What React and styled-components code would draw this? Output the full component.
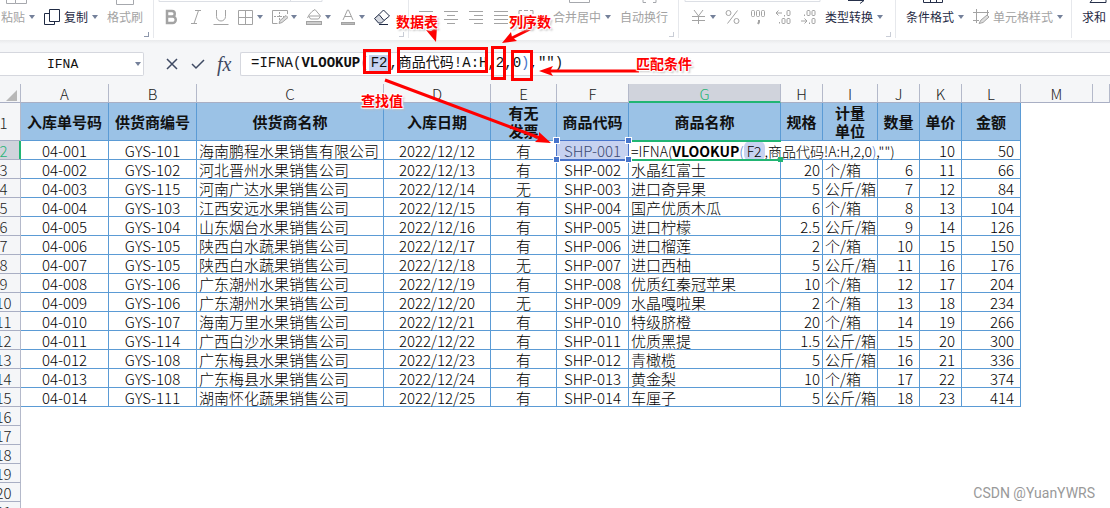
import { useState } from "react";
import styled, { createGlobalStyle, css } from "styled-components";

const letters = ["A", "B", "C", "D", "E", "F", "G", "H", "I", "J", "K", "L", "M"];
const widths = [88, 88, 187, 107, 66, 72, 152, 42, 55, 42, 42, 59, 72];

const titles = [
    "入库单号码", "供货商编号", "供货商名称", "入库日期", "有无发票", "商品代码",
    "商品名称", "规格", "计量单位", "数量", "单价", "金额",
];

const aligns = ["center", "center", "left", "center", "center", "center", "left", "right", "left", "mid", "mid", "far"];

const rows = [
    ["04-001", "GYS-101", "海南鹏程水果销售有限公司", "2022/12/12", "有", "SHP-001", "", "", "", "", "10", "50"],
    ["04-002", "GYS-102", "河北晋州水果销售公司", "2022/12/13", "有", "SHP-002", "水晶红富士", "20", "个/箱", "6", "11", "66"],
    ["04-003", "GYS-115", "河南广达水果销售公司", "2022/12/14", "无", "SHP-003", "进口奇异果", "5", "公斤/箱", "7", "12", "84"],
    ["04-004", "GYS-103", "江西安远水果销售公司", "2022/12/15", "有", "SHP-004", "国产优质木瓜", "6", "个/箱", "8", "13", "104"],
    ["04-005", "GYS-104", "山东烟台水果销售公司", "2022/12/16", "有", "SHP-005", "进口柠檬", "2.5", "公斤/箱", "9", "14", "126"],
    ["04-006", "GYS-105", "陕西白水蔬果销售公司", "2022/12/17", "有", "SHP-006", "进口榴莲", "2", "个/箱", "10", "15", "150"],
    ["04-007", "GYS-105", "陕西白水蔬果销售公司", "2022/12/18", "无", "SHP-007", "进口西柚", "5", "公斤/箱", "11", "16", "176"],
    ["04-008", "GYS-106", "广东潮州水果销售公司", "2022/12/19", "有", "SHP-008", "优质红秦冠苹果", "10", "个/箱", "12", "17", "204"],
    ["04-009", "GYS-106", "广东潮州水果销售公司", "2022/12/20", "无", "SHP-009", "水晶嘎啦果", "2", "个/箱", "13", "18", "234"],
    ["04-010", "GYS-107", "海南万里水果销售公司", "2022/12/21", "有", "SHP-010", "特级脐橙", "20", "个/箱", "14", "19", "266"],
    ["04-011", "GYS-114", "广西白沙水果销售公司", "2022/12/22", "有", "SHP-011", "优质黑提", "1.5", "公斤/箱", "15", "20", "300"],
    ["04-012", "GYS-108", "广东梅县水果销售公司", "2022/12/23", "有", "SHP-012", "青橄榄", "5", "公斤/箱", "16", "21", "336"],
    ["04-013", "GYS-108", "广东梅县水果销售公司", "2022/12/24", "有", "SHP-013", "黄金梨", "10", "个/箱", "17", "22", "374"],
    ["04-014", "GYS-111", "湖南怀化蔬果销售公司", "2022/12/25", "有", "SHP-014", "车厘子", "5", "公斤/箱", "18", "23", "414"],
];

const emptyRows = [16, 17, 18, 19, 20, 21];

const iconPaths = {
    copy: <><path d="M5.5 .5h10v12h-10z" /><path d="M5.5 4.500h-5v11h10v-3" /></>,
    bold: <path d="M4 2v12h5.500a3 3 0 0 0 0-6.500h-5.500h5a2.700 2.700 0 0 0 0-5.500z" strokeWidth="2.500" />,
    italic: <path d="M7 1.500h6M3 14.500h6M10.500 1.500l-4.500 13" />,
    underline: <path d="M3.500 1v6.500a4.500 4.500 0 0 0 9 0v-6.500M.5 15.500h15" />,
    borders: <path d="M.5 1.500h14v14h-14zM7.500 1.500v14M.5 8.500h14" />,
    borderPen: <><path d="M15.500 5v-3.500h-15v13h5" /><path d="M7.500 3v9M2 7.500h10" strokeDasharray="2 1" /><path d="M7 14.500l1-3 6-5 2 2-6 5z" fill="#ddd" /></>,
    fill: <><path d="M6 2.500l3-2 5.500 6.500-2 3h-8l-2-3.500zM3 7h11M1.500 9l1-2" /><rect x="0.500" y="12.500" width="15" height="3" fill="#ccc" /></>,
    fontColor: <><path d="M3 11l4.500-10h1l4.500 10M5 7.500h6" /><rect x="1.500" y="13.500" width="13" height="2" fill="#bbb" /></>,
    eraser: <><path d="M5 5.500l5 6-2.500 2.500h-3l-4-4.500z" fill="#d7dae1" /><path d="M5 5.500l4.500-4.500 6 6-5.500 4.500M5 15.500h9" /></>,
    alignLeft: <path d="M1 2.500h14M1 6.500h9M1 10.500h14M1 14.500h9" />,
    alignCenter: <path d="M1 2.500h14M4 6.500h8M1 10.500h14M4 14.500h8" />,
    alignRight: <path d="M1 2.500h14M6 6.500h9M1 10.500h14M6 14.500h9" />,
    justify: <path d="M1 2.500h14M1 6.500h14M1 10.500h14M1 14.500h14" />,
    distribute: <path d="M1 5v-3.500h3M12 1.500h3v3.500M6 1.500h4M1 10.500h14M1 14.500h14M3 6.500h10" />,
    yen: <path d="M3 1l4.500 6 4.500-6M7.500 7v8M1 7.500h13M1 11.500h13" />,
    percent: <><circle cx="3.500" cy="4" r="2.500" /><circle cx="11.500" cy="12" r="2.500" /><path d="M12.500 1.500l-10 13" /></>,
    thousands: <><rect x="1.500" y="1.500" width="3" height="6" rx="1" /><rect x="6.500" y="1.500" width="3" height="6" rx="1" /><rect x="11.500" y="1.500" width="3" height="6" rx="1" /><path d="M9 11v2l-1 2" strokeWidth="2" /></>,
    moreDecimals: <><path d="M7 4h-6l2.500-2.500M1 4l2.500 2.500" /><path d="M9.500 6v1.500M4.500 13v1.500" /><rect x="12" y="1.500" width="3" height="5" rx="1" /><rect x="7" y="9.500" width="3" height="5" rx="1" /><rect x="12" y="9.500" width="3" height="5" rx="1" /></>,
    fewerDecimals: <><path d="M1 12h6l-2.500-2.500M7 12l-2.500 2.500" /><path d="M4.500 5.500v1.500M9.500 13.500v1.500" /><rect x="7" y="1.500" width="3" height="5" rx="1" /><rect x="12" y="1.500" width="3" height="5" rx="1" /><rect x="12" y="9.500" width="3" height="5" rx="1" /></>,
    cellStyle: <><path d="M0 3.500h16M3.500 0v14M14.500 1v5M0 11.500h6" /><path d="M6 14.500l2-3.500 6-5 2 2-6 5.500z" fill="#ddd" /></>,
};

function Icon({ name }) {
    return (
        <svg width="16" height="16" viewBox="0 0 16 16" fill="none" stroke="currentColor" aria-hidden="true">
            {iconPaths[name]}
        </svg>
    );
}

function Caret() {
    return (
        <svg width="6" height="4" viewBox="0 0 6 4" aria-hidden="true">
            <path d="M0 0h6l-3 4z" fill="#74809a" />
        </svg>
    );
}

function Tool({ icon, text, label, dark, menu }) {
    return (
        <ToolButton type="button" aria-label={label || text} $dark={dark} $text={Boolean(text)}>
            {icon && <Icon name={icon} />}
            {text && <span>{text}</span>}
            {menu && <Caret />}
        </ToolButton>
    );
}

function Group({ width, pad, stub, launcher, children }) {
    return (
        <ToolGroup $width={width}>
            <svg width="100%" height="6" fill="none" stroke="#a6a8ad" aria-hidden="true">{stub}</svg>
            <ToolRow $pad={pad}>{children}</ToolRow>
            {launcher && <Launcher type="button" aria-label="更多设置" $dim={launcher === "dim"} />}
        </ToolGroup>
    );
}

function Toolbar() {
    return (
        <Ribbon>
            <Group width={154} pad={1} launcher="on" stub={<path d="M6.500 0v3.500h9M15.500 0v3.500h11v-3.500M116.500 0v4.500h17v-4.500" />}>
                <Tool text="粘贴" menu />
                <Tool icon="copy" text="复制" dark menu />
                <Tool text="格式刷" />
            </Group>
            <Group width={255} pad={9} launcher="dim" stub={<path d="M5 0v1.500h163v-1.500M136.500 0v1.500" stroke="#dcdfe5" />}>
                <Tool icon="bold" label="加粗" />
                <Tool icon="italic" label="倾斜" />
                <Tool icon="underline" label="下划线" />
                <Tool icon="borders" label="边框" menu />
                <Tool icon="borderPen" label="绘制边框" menu />
                <Tool icon="fill" label="填充颜色" menu />
                <Tool icon="fontColor" label="字体颜色" menu />
                <Tool icon="eraser" label="清除" dark />
            </Group>
            <Group width={270} pad={9} launcher="dim" stub={<path d="M160.500 0v2.500h20v-2.500M234 0v2.500h3M247 0v2.500h-3" />}>
                <Tool icon="alignLeft" label="左对齐" />
                <Tool icon="alignCenter" label="居中" />
                <Tool icon="alignRight" label="右对齐" />
                <Tool icon="justify" label="两端对齐" />
                <Tool icon="distribute" label="分散对齐" />
                <Space />
                <Tool text="合并居中" menu />
                <Tool text="自动换行" />
            </Group>
            <Group
                width={217}
                pad={12}
                launcher="dim"
                stub={<><path d="M6 0v1.500h135v-1.500" stroke="#dcdfe5" /><path d="M169 .5h16M181 3.500l4-3" stroke="#26304a" /></>}
            >
                <Tool icon="yen" label="货币" menu />
                <Tool icon="percent" label="百分比" />
                <Tool icon="thousands" label="千位分隔" />
                <Tool icon="moreDecimals" label="增加小数位" />
                <Tool icon="fewerDecimals" label="减少小数位" />
                <Tool text="类型转换" dark menu />
            </Group>
            <Group width={176} pad={10} stub={<path d="M27.500 0v2.500h19v-2.500M34.500 0v2.500M40.500 0v2.500" stroke="#26304a" />}>
                <Tool text="条件格式" dark menu />
                <Tool icon="cellStyle" text="单元格样式" menu />
            </Group>
            <Group pad={10} stub={<path d="M20 0l-2 2.500h16v-2.500" stroke="#26304a" />}>
                <Tool text="求和" dark menu />
            </Group>
        </Ribbon>
    );
}

function FormulaBar() {
    const [name, setName] = useState("IFNA");

    return (
        <BarRow>
            <NameBox>
                <NameInput aria-label="名称框" value={name} onChange={(e) => setName(e.target.value)} />
                <Caret />
            </NameBox>
            <BarActions>
                <BarButton type="button" aria-label="取消">
                    <svg width="14" height="14" viewBox="0 0 14 14" fill="none" stroke="currentColor"><path d="M2 2l10 10M12 2l-10 10" strokeWidth="1.500" /></svg>
                </BarButton>
                <BarButton type="button" aria-label="输入">
                    <svg width="14" height="14" viewBox="0 0 14 14" fill="none" stroke="currentColor"><path d="M1 7l4 4 8-8" strokeWidth="1.500" /></svg>
                </BarButton>
                <FxButton type="button" aria-label="插入函数">fx</FxButton>
            </BarActions>
            <FormulaBox role="textbox" aria-label="编辑栏" tabIndex={0}>
                =IFNA(<b>VLOOKUP</b><Paren>(</Paren><Mark>F2</Mark>,商品代码!A:H,2,0<Paren>)</Paren>,"")
            </FormulaBox>
        </BarRow>
    );
}

function Sheet() {
    return (
        <SheetTable>
            <colgroup>
                <Col $width={34} />
                {widths.map((w, i) => <Col key={letters[i]} $width={w} />)}
                <col />
            </colgroup>
            <thead>
                <tr>
                    <CornerHead aria-label="全选">
                        <svg width="11" height="11" viewBox="0 0 11 11"><path d="M11 0v11h-11z" fill="#b8b8b8" /></svg>
                    </CornerHead>
                    {letters.map((l) => <ColHead key={l} scope="col" $active={l === "G"}>{l}</ColHead>)}
                    <ColHead aria-hidden="true" />
                </tr>
            </thead>
            <tbody>
                <tr>
                    <RowHead scope="row" $tall>1</RowHead>
                    {titles.map((t) => (
                        <TitleCell key={t}>
                            <Title $narrow={t === "有无发票" || t === "计量单位"}>{t}</Title>
                        </TitleCell>
                    ))}
                    <Blank colSpan={2} />
                </tr>
                {rows.map((row, r) => (
                    <tr key={row[0]}>
                        <RowHead scope="row" $active={r === 0}>{r + 2}</RowHead>
                        {row.map((value, c) => {
                            if (r === 0 && c === 5) {
                                return <RefCell key={c}>{value}<Handle $x="left" $y="top" /><Handle $x="right" $y="top" /><Handle $x="left" $y="bottom" /><Handle $x="right" $y="bottom" /></RefCell>;
                            }
                            if (r === 0 && c === 6) {
                                return (
                                    <EditCell key={c} colSpan={4}>
                                        <CellFrame />
                                        =IFNA(<b>VLOOKUP</b><Paren>(</Paren><RefChip>F2</RefChip>,商品代码!A:H,2,0<Paren>)</Paren>,"")
                                    </EditCell>
                                );
                            }
                            if (r === 0 && c > 6 && c < 10) return null;
                            return <Cell key={c} $align={aligns[c]}>{value}</Cell>;
                        })}
                        <Blank colSpan={2} />
                    </tr>
                ))}
                {emptyRows.map((n) => (
                    <tr key={n}>
                        <RowHead scope="row">{n}</RowHead>
                        <Blank colSpan={14} />
                    </tr>
                ))}
            </tbody>
        </SheetTable>
    );
}

function Notes() {
    return (
        <NoteLayer>
            <svg width="1110" height="508" viewBox="0 0 1110 508" fill="none" stroke="#f00" strokeWidth="3" aria-hidden="true">
                <rect x="364.500" y="50.500" width="25" height="22" />
                <rect x="398.500" y="48.500" width="88" height="23" />
                <rect x="492.500" y="47.500" width="12" height="31" />
                <rect x="512.500" y="51.500" width="19" height="28" />
                <path d="M532 28L512 38M639 71H550M385 80L540 138" />
                <g fill="#f00" stroke="none">
                    <path d="M436 42l-10-12 5 1 6-4z" />
                    <path d="M502 43l9-11 1 5 5 4z" />
                    <path d="M539 71l14-5-3 5 3 5z" />
                    <path d="M551 143l-16-1 4-4 0-6z" />
                </g>
            </svg>
            <NoteText $x={396} $y={11}>数据表</NoteText>
            <NoteText $x={509} $y={11}>列序数</NoteText>
            <NoteText $x={636} $y={53}>匹配条件</NoteText>
            <NoteText $x={361} $y={90}>查找值</NoteText>
        </NoteLayer>
    );
}

export default function App() {
    return (
        <Page>
            <GlobalStyle />
            <Toolbar />
            <FormulaBar />
            <Sheet />
            <Notes />
            <Watermark>CSDN @YuanYWRS</Watermark>
        </Page>
    );
}

const GlobalStyle = createGlobalStyle`
    * {
        box-sizing: border-box;
    }
    body {
        margin: 0;
        background: #fff;
        font-family: "Noto Sans CJK SC", sans-serif;
    }
    button {
        font-family: inherit;
        border: none;
        background: none;
        padding: 0;
    }
`;

const Page = styled.div`
    position: relative;
    height: 100vh;
    overflow: hidden;
    color: #222;
`;

const Ribbon = styled.div`
    display: flex;
    height: 40px;
    background: #fff;
    overflow: hidden;
`;

const ToolGroup = styled.div`
    display: flex;
    flex-direction: column;
    flex: ${(props) => (props.$width ? `0 0 ${props.$width}px` : "1 0 0")};
    height: 38px;
    border-right: ${(props) => (props.$width ? "1px solid #e6e8ec" : "none")};
    svg {
        flex-shrink: 0;
    }
`;

const ToolRow = styled.div`
    display: flex;
    align-items: center;
    gap: 9px;
    height: 22px;
    padding-left: ${(props) => props.$pad}px;
`;

const ToolButton = styled.button`
    display: flex;
    align-items: center;
    flex-shrink: 0;
    gap: ${(props) => (props.$text ? 4 : 3)}px;
    font-size: 12px;
    line-height: 20px;
    white-space: nowrap;
    color: ${(props) => (props.$dark ? "#1f2a44" : "#a3a3a3")};
`;

const Space = styled.span`
    width: 1px;
`;

const Launcher = styled.button`
    align-self: flex-end;
    width: 5px;
    height: 5px;
    margin: 4px 4px 0 0;
    border-right: 1px solid ${(props) => (props.$dim ? "#c9cdd6" : "#8d97ab")};
    border-bottom: 1px solid ${(props) => (props.$dim ? "#c9cdd6" : "#8d97ab")};
`;

const BarRow = styled.div`
    display: flex;
    align-items: center;
    height: 44px;
    padding-bottom: 8px;
    padding-top: 12px;
    background: linear-gradient(#e9eaec, #f5f6f8 4px);
`;

const boxed = css`
    height: 24px;
    background: #fff;
    border: 1px solid #d5d7de;
`;

const NameBox = styled.div`
    ${boxed}
    display: flex;
    align-items: center;
    flex: 0 0 144px;
    min-width: 0;
    padding-right: 2px;
    border-left: none;
    border-radius: 0 2px 2px 0;
`;

const NameInput = styled.input`
    flex: 1;
    min-width: 0;
    width: 100%;
    padding: 0 0 0 47px;
    border: none;
    outline: none;
    background: none;
    font-family: "Liberation Mono", monospace;
    font-size: 13px;
    color: #111;
`;

const BarActions = styled.div`
    display: flex;
    align-items: center;
    flex: 0 0 96px;
    gap: 12px;
    padding-left: 21px;
`;

const BarButton = styled.button`
    display: flex;
    color: #3f4a63;
`;

const FxButton = styled(BarButton)`
    font-family: "Liberation Serif", serif;
    font-style: italic;
    font-size: 20px;
    line-height: 20px;
`;

const FormulaBox = styled.div`
    ${boxed}
    flex: 1;
    padding-left: 10px;
    border-right: none;
    border-radius: 2px 0 0 2px;
    font-family: "Liberation Mono", "Noto Sans CJK SC", monospace;
    font-size: 14px;
    line-height: 20px;
    white-space: nowrap;
    color: #111;
`;

const Paren = styled.span`
    color: #4874cb;
`;

const Mark = styled.span`
    padding: 0 2px;
    background: #c7d2f0;
`;

const SheetTable = styled.table`
    width: calc(100% + 13px);
    margin-left: -13px;
    table-layout: fixed;
    border-collapse: separate;
    border-spacing: 0;
    font-size: 15px;
    font-weight: 300;
    line-height: 16px;
    color: #000;
`;

const Col = styled.col`
    width: ${(props) => props.$width}px;
`;

const headCell = css`
    height: 19px;
    padding: 2px 0 0;
    font-weight: 300;
    text-align: center;
    background: #f5f6f8;
    color: #222;
    border-right: 1px solid #b4b9ca;
    border-bottom: 1px solid #a9afc4;
`;

const CornerHead = styled.th`
    ${headCell}
    svg {
        display: block;
        margin: 2px 3px 0 auto;
    }
`;

const ColHead = styled.th`
    ${headCell}
    ${(props) => props.$active && css`
        background: #d0d3dc;
        color: #27b378;
        box-shadow: inset 0 -1px 0 #21b573;
        border-bottom-color: #21b573;
    `}
`;

const RowHead = styled.th`
    ${headCell}
    height: ${(props) => (props.$tall ? 38 : 19)}px;
    ${(props) => props.$active && css`
        background: #d0d3dc;
        color: #27b378;
        box-shadow: inset -1px 0 0 #21b573;
        border-right-color: #21b573;
    `}
`;

const TitleCell = styled.td`
    height: 38px;
    padding: 0;
    background: #9bc2e6;
    border-right: 1px solid #5b9bd5;
    border-bottom: 1px solid #5b9bd5;
    text-align: center;
    font-weight: 700;
    line-height: 18px;
    color: #111;
    white-space: nowrap;
`;

const Title = styled.span`
    display: block;
    width: ${(props) => (props.$narrow ? "30px" : "auto")};
    margin: 0 auto;
    white-space: ${(props) => (props.$narrow ? "normal" : "nowrap")};
`;

const cellPadding = {
    center: "2px 0 0",
    left: "2px 0 0 2px",
    right: "2px 2px 0 0",
    mid: "2px 6px 0 0",
    far: "2px 6px 0 0",
};

const Cell = styled.td`
    height: 19px;
    padding: ${(props) => cellPadding[props.$align]};
    text-align: ${(props) => (props.$align === "center" || props.$align === "left" ? props.$align : "right")};
    background: #fff;
    border-right: 1px solid #5b9bd5;
    border-bottom: 1px solid #5b9bd5;
    white-space: nowrap;
`;

const RefCell = styled(Cell).attrs({ $align: "center" })`
    position: relative;
    background: #c7d2f0;
    color: #3c4a72;
    box-shadow: 0 0 0 1px #4874cb;
    border-color: #4874cb;
`;

const Handle = styled.span`
    position: absolute;
    z-index: 2;
    width: 5px;
    height: 5px;
    background: #4874cb;
    outline: 1px solid #fff;
    ${(props) => props.$x}: -3px;
    ${(props) => props.$y}: -3px;
`;

const EditCell = styled(Cell).attrs({ $align: "left" })`
    position: relative;
    font-size: 14px;
    b {
        font-weight: 700;
    }
`;

const CellFrame = styled.span`
    position: absolute;
    top: -1px;
    left: 0;
    bottom: -2px;
    width: 152px;
    border-top: 2px solid #21b573;
    border-bottom: 2px solid #21b573;
    &::after {
        content: "";
        position: absolute;
        right: -2px;
        bottom: -3px;
        width: 5px;
        height: 5px;
        background: #21b573;
    }
`;

const RefChip = styled.span`
    padding: 0 3px;
    border-radius: 6px;
    background: #c7d2f0;
`;

const Blank = styled.td`
    padding: 0;
`;

const NoteLayer = styled.div`
    position: absolute;
    top: 0;
    left: 0;
    pointer-events: none;
`;

const NoteText = styled.span`
    position: absolute;
    left: ${(props) => props.$x}px;
    top: ${(props) => props.$y}px;
    font-size: 14px;
    line-height: 20px;
    font-weight: 700;
    white-space: nowrap;
    color: #f00;
    text-shadow: 1px 1px 1px #fff, -1px -1px 1px #fff, 1px -1px 1px #fff, -1px 1px 1px #fff, 2px 2px 2px #bbb;
`;

const Watermark = styled.div`
    position: absolute;
    right: 15px;
    bottom: 6px;
    font-family: Roboto, sans-serif;
    font-size: 14px;
    line-height: 18px;
    color: #999;
`;
